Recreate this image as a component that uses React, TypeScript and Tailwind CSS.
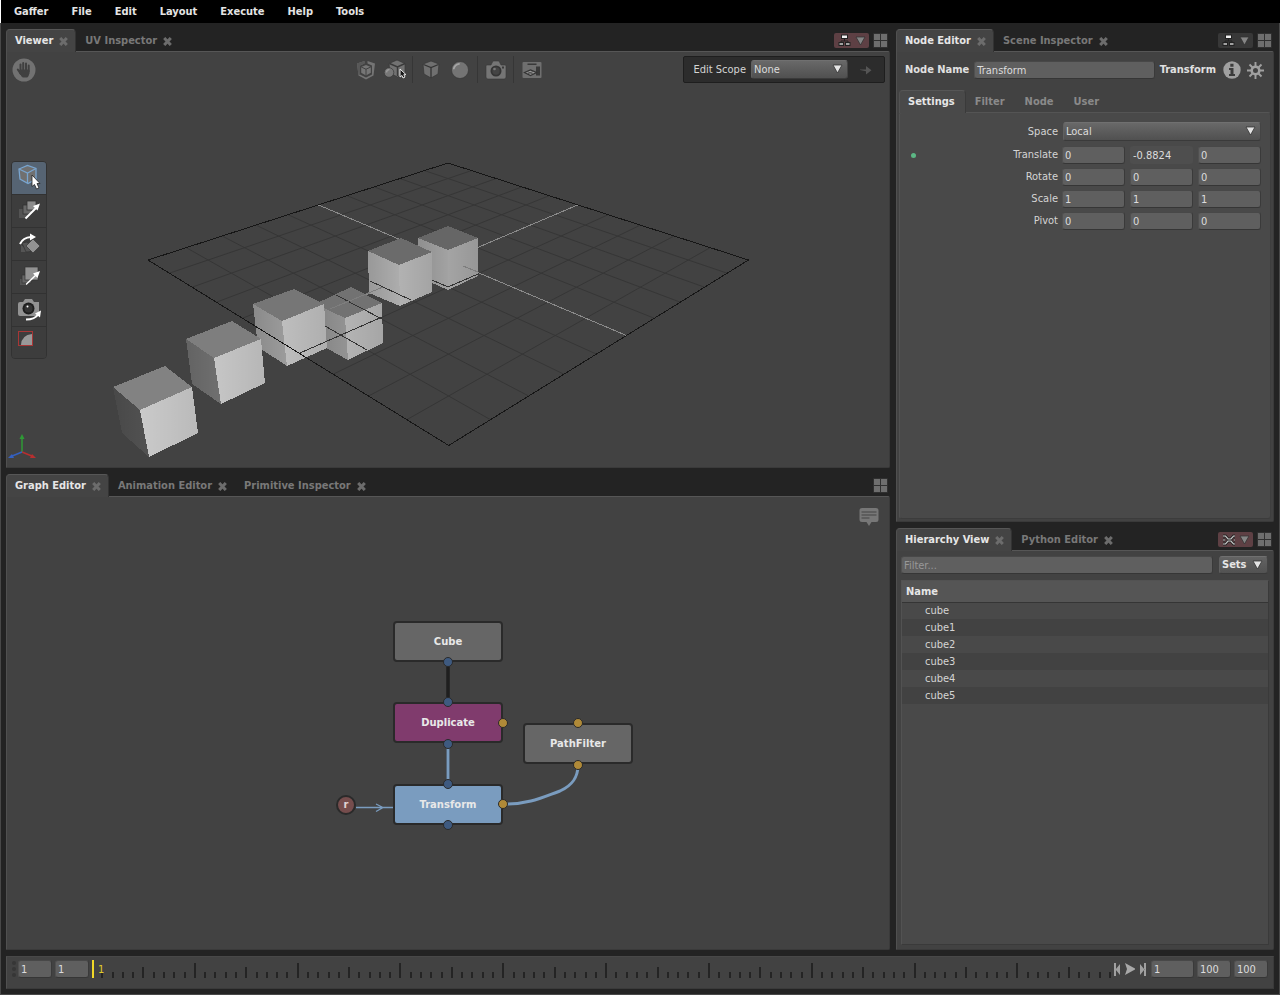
import { useState, type ReactNode } from 'react';
import clsx from 'clsx';

const MENUS = ['Gaffer', 'File', 'Edit', 'Layout', 'Execute', 'Help', 'Tools'];
const LOCATIONS = ['cube', 'cube1', 'cube2', 'cube3', 'cube4', 'cube5'];

const FIELD =
  'h-[18px] min-w-0 rounded-[3px] border border-t-[#484848] border-l-[#505050] border-r-[#3a3a3a] border-b-[#363636] bg-[#5f5f5f] px-[2px] text-[11px] text-[#dcdcdc] outline-none';

function CloseIcon() {
  return (
    <svg width="9" height="9" viewBox="0 0 9 9" className="text-[#6c6c6c]">
      <path d="M1.200 1 7.800 8M7.800 1 1.200 8" stroke="currentColor" strokeWidth="3" />
    </svg>
  );
}

function LayoutIcon() {
  return (
    <svg width="15" height="15" viewBox="0 0 15 15">
      <rect width="15" height="15" rx="1" fill="#303030" />
      <path d="M1 1h6v6H1zM8 1h6v6H8zM1 8h6v6H1zM8 8h6v6H8z" fill="#6e6e6e" />
    </svg>
  );
}

function Arrow({ dim = false }: { dim?: boolean }) {
  return (
    <svg width="9" height="8" viewBox="0 0 9 8" className="overflow-visible">
      <path d="M0 0h9L4.500 8z" fill={dim ? '#858585' : '#e4e4e4'} stroke="#333" strokeWidth=".8" />
    </svg>
  );
}

function FocusIcon() {
  return (
    <svg width="13" height="13" viewBox="0 0 13 13">
      <path d="M6.500 4v3M3 9V7h7v2" stroke="#222" fill="none" />
      <rect x="3.500" y="1" width="6" height="3.500" fill="#f0f0f0" stroke="#222" />
      <rect x="1" y="8.500" width="4.500" height="3" fill="#a2a2a2" stroke="#222" />
      <rect x="7.500" y="8.500" width="4.500" height="3" fill="#a2a2a2" stroke="#222" />
    </svg>
  );
}

function UnlinkIcon() {
  const d = 'M1 2h2.500L6 5h3l2.500-3H13M1 10h2.500L6 7h3l2.500 3H13M1 6h2M12 6h1';
  return (
    <svg width="14" height="12" viewBox="0 0 14 12" fill="none">
      <path d={d} stroke="#222" strokeWidth="2.800" />
      <path d={d} stroke="#c8c8c8" strokeWidth="1.200" />
    </svg>
  );
}

function PinButton({ pinned, icon }: { pinned: boolean; icon: ReactNode }) {
  return (
    <button
      aria-label="Editor focus"
      className={clsx(
        'flex h-[15px] w-[35px] items-center justify-between rounded-[2px] pr-1 pl-1',
        pinned ? 'bg-[#5e4044]' : 'bg-[#383838]',
      )}
    >
      {icon}
      <Arrow dim />
    </button>
  );
}

type EditorProps = {
  tabs: string[];
  controls: ReactNode;
  className: string;
  children: ReactNode;
};

function Editor({ tabs, controls, className, children }: EditorProps) {
  return (
    <section className={clsx('flex min-h-0 flex-col', className)}>
      <div className="flex h-[22px] items-start">
        <div className="flex" role="tablist">
          {tabs.map((tab, i) => (
            <div
              key={tab}
              className={clsx(
                'relative flex h-[23px] items-center gap-[6px] rounded-t-[4px] border border-b-0 pr-[7px] pl-2',
                i === 0
                  ? 'z-10 border-t-[#565656] border-r-[#333] border-l-[#505050] bg-[#444]'
                  : 'border-transparent',
              )}
            >
              <button
                role="tab"
                aria-selected={i === 0}
                className={clsx('font-bold', i === 0 ? 'text-[#e6e6e6]' : 'text-[#787878]')}
              >
                {tab}
              </button>
              <button aria-label={`Close ${tab}`}>
                <CloseIcon />
              </button>
            </div>
          ))}
        </div>
        <div className="ml-auto flex gap-1 pt-1 pr-[2px]">
          {controls}
          <button aria-label="Layout">
            <LayoutIcon />
          </button>
        </div>
      </div>
      <div className="relative flex min-h-0 flex-1 flex-col rounded-r-[2px] border border-t-[#565656] border-r-[#3a3a3a] border-b-[#3a3a3a] border-l-[#505050] bg-[#424242]">
        {children}
      </div>
    </section>
  );
}

function ObjectsIcon() {
  return (
    <svg width="22" height="22" viewBox="0 0 22 22">
      <path d="M2 4.500 9.500 2V4.500L5 6.500V15.500l6 3 6-3V6.500L12.500 4.500V2L20 4.500 18.500 16.500 11 20.500 3.500 16.500z" fill="#747474" />
      <path d="M2 4.500 9.500 2V4.500L5 6.500V15.500L3.500 16.500z" fill="#585858" />
      <path d="M6.200 8 11 6l4.800 2v5.800L11 16.500l-4.800-2.700z" fill="#767676" />
      <path d="M6.200 8 11 10.200 15.800 8M11 10.200v6.300" fill="none" stroke="#3c3c3c" strokeWidth=".9" />
    </svg>
  );
}

function ExpansionIcon() {
  return (
    <svg width="22" height="22" viewBox="0 0 22 22">
      <path d="M5 4.500 13 1l8 3.500V14l-7.500 4L6 14z" fill="#727272" stroke="#363636" strokeWidth=".7" />
      <path d="M5.500 4.500 13.500 8 21 4.500M13.500 8v9" fill="none" stroke="#3a3a3a" strokeWidth="1.400" />
      <circle cx="5" cy="13.500" r="4.800" fill="#777" stroke="#363636" strokeWidth=".7" />
      <path d="M2.500 13.500a3 3 0 0 1 3-3" stroke="#999" strokeWidth="1.500" fill="none" />
      <path d="M16 10v8l2-1.500 1 2.500 2-1-1.200-2.300H22z" fill="#161616" stroke="#e8e8e8" strokeWidth="1" />
    </svg>
  );
}

function ShadingIcon() {
  return (
    <svg width="22" height="22" viewBox="0 0 22 22">
      <path d="M3 5 11 2l8 3-1 10-7 4-7-4z" fill="#707070" stroke="#363636" strokeWidth=".7" />
      <path d="M3.500 5.500 11 8.500l7.500-3M11 8.500V19" fill="none" stroke="#343434" strokeWidth="1.300" />
    </svg>
  );
}

function SphereIcon() {
  return (
    <svg width="22" height="22" viewBox="0 0 22 22">
      <circle cx="11" cy="11" r="8.500" fill="#747474" stroke="#363636" strokeWidth=".7" />
      <path d="M4.800 9.500Q6 5.500 10 4.800" fill="none" stroke="#a5a5a5" strokeWidth="1.800" strokeLinecap="round" />
    </svg>
  );
}

function CameraIcon() {
  return (
    <svg width="22" height="22" viewBox="0 0 22 22">
      <path d="M2 6h4l2-4h6l2 4h4q1 0 1 1v11q0 2-2 2H3q-2 0-2-2V7q0-1 1-1z" fill="#757575" stroke="#383838" strokeWidth=".6" />
      <circle cx="11" cy="12" r="5.500" fill="#353535" />
      <circle cx="11" cy="12" r="3.700" fill="#444" />
      <circle cx="9.500" cy="10" r="1.300" fill="#777" />
      <rect x="17" y="7.500" width="2" height="2" fill="#3a3a3a" />
    </svg>
  );
}

function GadgetIcon() {
  return (
    <svg width="22" height="22" viewBox="0 0 22 22">
      <rect x="1.500" y="3" width="19" height="16" rx="1" fill="#6f6f6f" />
      <rect x="6.500" y="4.500" width="9" height="1.500" fill="#393939" />
      <rect x="15" y="7.500" width="4" height="9" fill="#393939" />
      <path d="m3.500 13.500 6-2.500 6 2.500-6 3z" fill="#999" stroke="#333" strokeWidth="1.200" />
      <path d="m6 12.500 6 2.500M12.500 12.300 6.500 15" stroke="#444" strokeWidth=".8" />
    </svg>
  );
}

function HandIcon() {
  return (
    <svg width="24" height="24" viewBox="0 0 24 24">
      <circle cx="12" cy="12" r="11.500" fill="#727272" />
      <g stroke="#404040" strokeWidth="2" strokeLinecap="round" fill="#404040">
        <path d="M8.500 6.500v7M11.200 5v8M14 5.500v8M16.700 7.500v6M5.800 11.500l3 4.500" />
        <path d="M8.500 12h8.500v3.500L15.500 19h-5L8 15.500z" strokeWidth="1" />
      </g>
    </svg>
  );
}

const DISPLAY_TOOLS = [
  [
    { name: 'Drawn objects', icon: <ObjectsIcon /> },
    { name: 'Expansion', icon: <ExpansionIcon /> },
  ],
  [
    { name: 'Drawing mode', icon: <ShadingIcon /> },
    { name: 'Shading', icon: <SphereIcon /> },
  ],
  [{ name: 'Camera', icon: <CameraIcon /> }],
  [{ name: 'Gadgets', icon: <GadgetIcon /> }],
];

const TOOLS = [
  {
    name: 'Selection Tool',
    icon: (
      <svg width="28" height="28" viewBox="0 0 28 28">
        <path d="M4 6 12.500 2.500 21 5.500V16L13 20.500 5 16z" fill="#707070" stroke="#79a5cf" strokeWidth="1.300" />
        <path d="M4 6l8.500 4L21 5.500M12.500 10v10" fill="none" stroke="#79a5cf" strokeWidth="1.300" />
        <path d="M17 12v11.500l2.500-2 2 4.500 2.500-1-2-4.500H25z" fill="#fff" stroke="#222" strokeWidth=".8" />
      </svg>
    ),
  },
  {
    name: 'Translate Tool',
    icon: (
      <svg width="28" height="28" viewBox="0 0 28 28">
        <rect x="4" y="13" width="9" height="9" fill="#545454" />
        <rect x="8" y="9" width="9" height="9" fill="#686868" stroke="#333" strokeWidth=".8" />
        <rect x="12" y="5" width="9" height="9" fill="#8c8c8c" stroke="#333" strokeWidth=".8" />
        <path d="M10.500 22.500 22 11" stroke="#fff" strokeWidth="2" />
        <path d="m25 7.500-7 2.500 4.500 4.500z" fill="#fff" />
      </svg>
    ),
  },
  {
    name: 'Rotate Tool',
    icon: (
      <svg width="28" height="28" viewBox="0 0 28 28">
        <path d="M6 16 6 23h9z" fill="#555" />
        <path d="m7 14 5-1 8 9-9 1z" fill="#555" stroke="#333" strokeWidth=".7" />
        <path d="m11 17 7-7 7 7-7 7z" fill="#929292" stroke="#333" strokeWidth=".7" />
        <path d="M5 15Q8 8.500 16 8" fill="none" stroke="#fff" strokeWidth="2" />
        <path d="m21 8-6-3.500v7z" fill="#fff" />
      </svg>
    ),
  },
  {
    name: 'Scale Tool',
    icon: (
      <svg width="28" height="28" viewBox="0 0 28 28">
        <rect x="5" y="17" width="5" height="6" fill="#555" />
        <rect x="7" y="13" width="9" height="8" fill="#656565" stroke="#333" strokeWidth=".7" />
        <rect x="10" y="5" width="13" height="13" fill="#929292" stroke="#333" strokeWidth=".7" />
        <path d="M11 22.500 22 12" stroke="#fff" strokeWidth="1.500" />
        <path d="m25 9-7 2.500 4.500 4.500z" fill="#fff" />
      </svg>
    ),
  },
  {
    name: 'Camera Tool',
    icon: (
      <svg width="28" height="28" viewBox="0 0 28 28">
        <path d="M5 7h3l2-3h7l2 3h5v12q0 2-2 2H5q-2 0-2-2V9q0-2 2-2z" fill="#929292" />
        <circle cx="13.500" cy="13.500" r="6" fill="#1e1e1e" />
        <circle cx="13.500" cy="13.500" r="4" fill="#333" />
        <circle cx="12.500" cy="11.500" r="1" fill="#fff" />
        <path d="M11 24.500q9 0 12-5" fill="none" stroke="#fff" strokeWidth="2" />
        <path d="m26 15.500-6 3 5 4z" fill="#fff" />
      </svg>
    ),
  },
  {
    name: 'Crop Window Tool',
    icon: (
      <svg width="28" height="28" viewBox="0 0 28 28">
        <rect x="3.500" y="3.500" width="14" height="14" fill="none" stroke="#a83636" strokeWidth="1" />
        <path d="M6 17Q6.500 7 17 6v11z" fill="#999" />
      </svg>
    ),
  },
];

// Corners of the ground plane (top, right, left) in homogeneous form.
const TOP = [448, 163, 1.3133];
const RIGHT = [748.5, 260, 1];
const LEFT = [148, 260, 1];

function project(u: number, v: number) {
  const at = (i: number) => {
    const t = i === 2 ? TOP[2] : TOP[i] * TOP[2];
    return t + u * (RIGHT[i] - t) + v * (LEFT[i] - t);
  };
  const w = at(2);
  return `${(at(0) / w).toFixed(1)} ${(at(1) / w).toFixed(1)}`;
}

function planeLine(u0: number, v0: number, u1: number, v1: number) {
  return `M${project(u0, v0)}L${project(u1, v1)}`;
}

const GRID_LINES = [1, 2, 3, 4, 6, 7, 8, 9]
  .map((n) => planeLine(n / 10, 0, n / 10, 1) + planeLine(0, n / 10, 1, n / 10))
  .join('');

const CUBES = [
  { top: '448,226 478,238 448,250 418,238', left: '418,238 448,250 448,290 419,277', right: '448,250 478,238 478,276 448,290', fill: ['#666', '#a2a2a2', '#a4a4a4'] },
  { top: '401,238 432,252 399,265 368,251', left: '368,251 399,265 400,306 369,293', right: '399,265 432,252 432,292 400,306', fill: ['#6b6b6b', '#adadad', '#b2b2b2'] },
  { top: '351,287 382,303 345,318 315,304', left: '315,304 345,318 348,360 321,345', right: '345,318 382,303 383,343 348,360', fill: ['#727272', '#949494', '#b4b4b4'] },
  { top: '294,289 324,304 282,321 253,304', left: '253,304 282,321 287,366 258,347', right: '282,321 324,304 327,348 287,366', fill: ['#767676', '#9c9c9c', '#bebebe'] },
  { top: '232,321 261,339 214,358 186,339', left: '186,339 214,358 221,404 192,384', right: '214,358 261,339 265,383 221,404', fill: ['#7e7e7e', '#707070', '#c6c6c6'] },
  { top: '165,366 192,387 140,410 113,387', left: '113,387 140,410 149,457 122,433', right: '140,410 192,387 198,433 149,457', fill: ['#828282', '#525252', '#cacaca'] },
];

function Viewport() {
  return (
    <svg
      viewBox="7 52 882 415"
      preserveAspectRatio="xMidYMid slice"
      className="absolute inset-0 h-full w-full"
      fill="none"
      role="img"
      aria-label="Scene"
    >
      <defs>
        <linearGradient id="shadeLeft">
          <stop offset="0" stopColor="#000" stopOpacity=".12" />
          <stop offset="1" stopColor="#000" stopOpacity="0" />
        </linearGradient>
        <linearGradient id="shadeRight">
          <stop offset="0" stopColor="#000" stopOpacity="0" />
          <stop offset="1" stopColor="#000" stopOpacity=".08" />
        </linearGradient>
      </defs>
      <path d={GRID_LINES} stroke="#363636" />
      <g shapeRendering="crispEdges">
        <path d={planeLine(0.5, 0, 0.5, 1) + planeLine(0, 0.5, 1, 0.5)} stroke="#8a8a8a" />
        <path d={planeLine(0, 0, 1, 0) + planeLine(1, 0, 1, 1) + planeLine(0, 0, 0, 1)} stroke="#161616" />
        {CUBES.map((cube) => (
          <g key={cube.top}>
            <polygon points={cube.top} fill={cube.fill[0]} />
            <polygon points={cube.left} fill={cube.fill[1]} />
            <polygon points={cube.left} fill="url(#shadeLeft)" />
            <polygon points={cube.right} fill={cube.fill[2]} />
            <polygon points={cube.right} fill="url(#shadeRight)" />
          </g>
        ))}
        {/* parts of the plane that pass in front of the cubes */}
        <path d="M300 353 382 317M325 326 367 350M336 295 382 319M370 281 411 300M432 280 448 287 478 274" stroke="#333" />
        <path d="M330 309 383 287M463 266 478 272" stroke="#7e7e7e" />
        <path d={planeLine(0, 1, 1, 1)} stroke="#161616" />
      </g>
      <g strokeWidth="1.500">
        <path d="M22 452V438" stroke="#2f9a36" />
        <path d="M22 452 33 456.500" stroke="#b82f2f" />
        <path d="M22 452 11 456.500" stroke="#3460c0" />
      </g>
      <path d="m22 434-2.500 5h5z" fill="#2f9a36" />
      <path d="m36 458-6 0 2-4z" fill="#b82f2f" />
      <path d="m8 458 6 0-2-4z" fill="#3460c0" />
    </svg>
  );
}

function Select({ id, options, className }: { id: string; options: string[]; className: string }) {
  return (
    <div className={clsx('relative', className)}>
      <select
        id={id}
        className="block h-[19px] w-full appearance-none rounded-[3px] border border-t-[#707070] border-r-[#444] border-b-[#3a3a3a] border-l-[#606060] bg-linear-to-b from-[#696969] to-[#505050] pl-[2px] text-[11px] text-[#dcdcdc] outline-none"
      >
        {options.map((option) => (
          <option key={option}>{option}</option>
        ))}
      </select>
      <span className="pointer-events-none absolute top-[5px] right-[6px]">
        <Arrow />
      </span>
    </div>
  );
}

function Viewer() {
  return (
    <>
      <Viewport />
      <div className="relative grid grid-cols-[1fr_auto_1fr] items-center pt-1 pr-1 pl-[5px]">
        <button aria-label="Pan" className="justify-self-start">
          <HandIcon />
        </button>
        <div className="flex items-center gap-[6px]">
          {DISPLAY_TOOLS.map((group, i) => (
            <div key={group[0].name} className="flex items-center gap-[7px]">
              {i > 0 && <span className="h-[27px] w-px bg-[#363636]" />}
              {group.map((tool) => (
                <button key={tool.name} aria-label={tool.name}>
                  {tool.icon}
                </button>
              ))}
            </div>
          ))}
        </div>
        <div className="flex h-[27px] items-center justify-self-end rounded-[2px] border border-[#1e1e1e] bg-[#2c2c2c] pr-3 pl-[10px]">
          <label htmlFor="editScope" className="mr-[5px]">Edit Scope</label>
          <Select id="editScope" options={['None', 'Self']} className="w-[97px]" />
          <button aria-label="Edit scope navigation" className="ml-3">
            <svg width="12" height="10" viewBox="0 0 12 10">
              <path d="M0 4.500h6V1l5.500 4.200L6 9.500V6.200L0 5z" fill="#555" />
            </svg>
          </button>
        </div>
      </div>
      <div className="relative flex-1">
        <div className="absolute top-[78px] left-1 flex flex-col overflow-hidden rounded-[4px] border border-[#323232]">
          {TOOLS.map((tool, i) => (
            <button
              key={tool.name}
              aria-label={tool.name}
              className={clsx(
                'flex h-[33px] w-[34px] items-start justify-center border-b border-[#323232] pt-[1px] last:h-[31px] last:border-b-0',
                i === 0 ? 'bg-[#566473]' : 'bg-[#3d3d3d]',
              )}
            >
              {tool.icon}
            </button>
          ))}
        </div>
      </div>
    </>
  );
}

const NODES = [
  { name: 'Cube', className: 'left-[135px] top-[3px] bg-[#666]' },
  { name: 'Duplicate', className: 'left-[135px] top-[84px] bg-[#803b6d]' },
  { name: 'PathFilter', className: 'left-[265px] top-[105px] bg-[#666]' },
  { name: 'Transform', className: 'left-[135px] top-[166px] bg-[#7a9cbf]' },
];

const PLUGS = [
  { x: 190, y: 44, fill: '#3e5a80' },
  { x: 190, y: 84, fill: '#3e5a80' },
  { x: 190, y: 126, fill: '#3e5a80' },
  { x: 190, y: 166, fill: '#3e5a80' },
  { x: 190, y: 207, fill: '#3e5a80' },
  { x: 245, y: 105, fill: '#b08a38' },
  { x: 245, y: 186, fill: '#b08a38' },
  { x: 320, y: 105, fill: '#b08a38' },
  { x: 320, y: 147, fill: '#b08a38' },
];

function GraphEditor() {
  return (
    <div className="flex flex-1 items-center justify-center font-['DejaVu_Sans',sans-serif] text-[10px]">
      <button aria-label="Annotations" className="absolute top-[10px] right-[10px]">
        <svg width="20" height="20" viewBox="0 0 20 20">
          <path d="M3 1h14q2.500 0 2.500 2.500v9q0 2.500-2.500 2.500h-4.500L10 19 7.500 15H3Q.5 15 .5 12.500v-9Q.5 1 3 1z" fill="#777" />
          <path d="M2.500 5h15M2.500 8h15M2.500 11h8" stroke="#444" strokeWidth="1.200" />
        </svg>
      </button>
      <div className="relative h-[210px] w-[380px]">
        <svg viewBox="0 0 380 210" className="absolute inset-0 h-full w-full" fill="none">
          <path d="M190 44v40" stroke="#1f1f1f" strokeWidth="3.500" />
          <g stroke="#7a9cbf">
            <path d="M190 126v40" stroke="#303030" strokeWidth="4" />
            <path d="M190 126v40M248 186C272 186 285 179 302 173 315 167 320 159 320 147" strokeWidth="3" />
            <path d="M98 189.500h38M118 186l7 3.500-7 4" strokeWidth="1.300" />
          </g>
        </svg>
        {NODES.map((node) => (
          <div
            key={node.name}
            className={clsx(
              'absolute flex h-[41px] w-[110px] items-center justify-center rounded-[4px] border-2 border-[#2a2a2a] pt-px font-bold text-[#e8e8e8]',
              node.className,
            )}
          >
            {node.name}
          </div>
        ))}
        <div className="absolute top-[177px] left-[78px] flex h-5 w-5 items-center justify-center rounded-full border-2 border-[#2a2a2a] bg-[#764d4d] font-bold text-[#e0d4d4]">
          r
        </div>
        <svg viewBox="0 0 380 210" className="absolute inset-0 h-full w-full overflow-visible">
          {PLUGS.map((plug) => (
            <circle key={`${plug.x}-${plug.y}`} cx={plug.x} cy={plug.y} r="4.500" fill={plug.fill} stroke="#2a2a2a" />
          ))}
        </svg>
      </div>
    </div>
  );
}

const TRANSFORM_PLUGS = [
  { name: 'Translate', values: ['0', '-0.8824', '0'], edited: true },
  { name: 'Rotate', values: ['0', '0', '0'] },
  { name: 'Scale', values: ['1', '1', '1'] },
  { name: 'Pivot', values: ['0', '0', '0'] },
];

function NodeEditor() {
  const [name, setName] = useState('Transform');

  return (
    <div className="flex flex-1 flex-col px-[2px] pb-[2px]">
      <div className="flex h-9 items-center pr-[7px] pl-[6px]">
        <label htmlFor="nodeName" className="mr-[5px] font-bold text-[#e0e0e0]">Node Name</label>
        <input
          id="nodeName"
          value={name}
          onChange={(e) => setName(e.target.value)}
          className={clsx(FIELD, 'flex-1')}
        />
        <span className="mr-[7px] ml-[5px] font-bold text-[#e0e0e0]">Transform</span>
        <button aria-label="Node info" className="mr-[6px]">
          <svg width="18" height="18" viewBox="0 0 18 18">
            <circle cx="9" cy="9" r="8.700" fill="#a0a0a0" />
            <path d="M7.300 2.800h3.200v3H7.300zM6 7h4.500v6H12v2H6v-2h1.500V9H6z" fill="#3c3c3c" />
          </svg>
        </button>
        <button aria-label="Node settings">
          <svg width="17" height="17" viewBox="0 0 17 17" fill="none" stroke="#a0a0a0">
            <circle cx="8.500" cy="8.500" r="3.800" strokeWidth="2.600" />
            <path d="M8.500 0v4M8.500 13v4M0 8.500h4M13 8.500h4M2.500 2.500l3 3M11.500 11.500l3 3M14.500 2.500l-3 3M5.500 11.500l-3 3" strokeWidth="1.900" />
          </svg>
        </button>
      </div>
      <div className="mt-[2px] flex h-[22px] items-start" role="tablist">
        {['Settings', 'Filter', 'Node', 'User'].map((tab, i) => (
          <button
            key={tab}
            role="tab"
            aria-selected={i === 0}
            className={clsx(
              'relative h-[23px] rounded-t-[4px] border border-b-0 pr-[10px] pl-2 font-bold',
              i === 0
                ? 'z-10 border-t-[#565656] border-r-[#3a3a3a] border-l-[#525252] bg-[#494949] text-[#e6e6e6]'
                : 'border-transparent text-[#8a8a8a]',
            )}
          >
            {tab}
          </button>
        ))}
      </div>
      <div className="flex flex-1 flex-col gap-1 rounded-[3px] border border-t-[#545454] border-r-[#3e3e3e] border-b-[#3c3c3c] border-l-[#525252] bg-[#494949] pt-[9px] pr-[9px] pl-[11px]">
        <div className="mb-[1px] flex items-center justify-end">
          <label htmlFor="space" className="mr-[5px]">Space</label>
          <Select id="space" options={['Local', 'Parent', 'World']} className="w-[198px]" />
        </div>
        {TRANSFORM_PLUGS.map((plug) => (
          <div key={plug.name} role="group" aria-label={plug.name} className="flex items-center">
            {plug.edited && <span className="h-[5px] w-[5px] rounded-full bg-[#5cb885]" />}
            <span className="mr-[4px] ml-auto">{plug.name}</span>
            <div className="flex gap-[5px]">
              {plug.values.map((value, i) => (
                <input
                  key={i}
                  aria-label={`${plug.name} ${'xyz'[i]}`}
                  defaultValue={value}
                  className={clsx(
                    FIELD,
                    'w-[63px]',
                    value === '-0.8824' && 'border-transparent! bg-[#4e4e4e]!',
                  )}
                />
              ))}
            </div>
          </div>
        ))}
      </div>
    </div>
  );
}

function HierarchyView() {
  return (
    <div className="flex flex-1 flex-col px-1 pt-[5px] pb-1">
      <div className="mb-[6px] flex gap-[6px] pr-[1px]">
        <input aria-label="Filter" placeholder="Filter..." className={clsx(FIELD, 'flex-1 placeholder:text-[#989898]')} />
        <button className="flex h-[18px] w-[49px] items-center justify-between rounded-[3px] border border-t-[#707070] border-r-[#444] border-b-[#3a3a3a] border-l-[#606060] bg-linear-to-b from-[#636363] to-[#525252] pr-[5px] pl-[2px] font-bold text-[#e6e6e6]">
          Sets
          <Arrow />
        </button>
      </div>
      <div className="flex-1 border border-t-[#525252] border-r-[#3a3a3a] border-b-[#3a3a3a] border-l-[#525252] bg-[#494949]">
        <table className="w-full border-collapse text-left">
          <thead>
            <tr className="h-[21px] border-b border-[#353535] bg-[#555]">
              <th className="p-0 pt-px pl-1 font-bold text-[#e6e6e6]">Name</th>
            </tr>
          </thead>
          <tbody>
            {LOCATIONS.map((location) => (
              <tr key={location} className="h-[17px] even:bg-[#424242]">
                <td className="p-0 pl-[23px]">{location}</td>
              </tr>
            ))}
          </tbody>
        </table>
      </div>
    </div>
  );
}

function Timeline() {
  const frames = Array.from({ length: 99 }, (_, i) => i + 1);

  return (
    <footer className="mt-[6px] flex h-[33px] items-start border border-t-[#484848] border-r-[#3a3a3a] border-b-[#3a3a3a] border-l-[#505050] bg-[#424242] pt-[3px] pr-[5px] pl-[5px]">
      <svg width="4" height="18" viewBox="0 0 4 18" fill="#363636" className="mr-[2px]">
        <circle cx="2" cy="3" r="2" />
        <circle cx="2" cy="9" r="2" />
        <circle cx="2" cy="15" r="2" />
      </svg>
      <input aria-label="Start frame" defaultValue="1" className={clsx(FIELD, 'mr-[3px] w-[34px]')} />
      <input aria-label="Slider start" defaultValue="1" className={clsx(FIELD, 'w-[34px]')} />
      <svg height="18" className="mr-1 ml-[2px] min-w-0 flex-1 overflow-visible" role="img" aria-label="Frames">
        {frames.map((frame) => {
          const h = frame % 10 === 0 ? 15 : frame % 5 === 0 ? 11 : 6;
          return (
            <rect key={frame} x={`${(frame / 99) * 100}%`} y={18 - h} width="2" height={h} fill="#242424" shapeRendering="crispEdges" />
          );
        })}
        <rect x="1" width="2" height="18" fill="#f0d828" />
        <text x="7" y="13" fontSize="11" fill="#e0cc28">1</text>
      </svg>
      <div className="flex h-[18px] w-[38px] items-center justify-between pr-[4px]">
        <button aria-label="To start">
          <svg width="8" height="13" viewBox="0 0 8 13" fill="#a0a0a0">
            <path d="M1 0h2v13H1zM7 1v11L2.500 6.500z" />
          </svg>
        </button>
        <button aria-label="Play">
          <svg width="10" height="12" viewBox="0 0 10 12" fill="#a8a8a8">
            <path d="M0 0 10 5.500V6.500L0 12l2-6z" />
          </svg>
        </button>
        <button aria-label="To end">
          <svg width="8" height="13" viewBox="0 0 8 13" fill="#a0a0a0">
            <path d="M5 0h2v13H5zM1 1v11L5.500 6.500z" />
          </svg>
        </button>
      </div>
      <input aria-label="Current frame" defaultValue="1" className={clsx(FIELD, 'mr-[3px] w-[43px]')} />
      <input aria-label="Slider end" defaultValue="100" className={clsx(FIELD, 'mr-[3px] w-[34px]')} />
      <input aria-label="End frame" defaultValue="100" className={clsx(FIELD, 'w-[34px]')} />
    </footer>
  );
}

export default function App() {
  return (
    <div className="flex h-screen flex-col bg-[#232323] font-['DejaVu_Sans_Condensed','DejaVu_Sans',sans-serif] text-[11px] leading-[14px] text-[#d4d4d4]">
      <nav className="flex h-[23px] items-center gap-[23px] border-l border-white bg-black pl-[13px]">
        {MENUS.map((menu) => (
          <button key={menu} className="font-bold text-[#e4e4e4]">
            {menu}
          </button>
        ))}
      </nav>
      <div className="flex min-h-0 flex-1 flex-col border border-t-0 border-[#484848] px-[5px] pt-[6px] pb-[5px]">
        <main className="flex min-h-0 flex-1 gap-[6px]">
          <div className="flex min-w-0 flex-[884] flex-col gap-[6px]">
            <Editor
              tabs={['Viewer', 'UV Inspector']}
              controls={<PinButton pinned icon={<FocusIcon />} />}
              className="flex-[439]"
            >
              <Viewer />
            </Editor>
            <Editor
              tabs={['Graph Editor', 'Animation Editor', 'Primitive Inspector']}
              controls={null}
              className="flex-[476]"
            >
              <GraphEditor />
            </Editor>
          </div>
          <div className="flex min-w-0 flex-[378] flex-col gap-[6px]">
            <Editor
              tabs={['Node Editor', 'Scene Inspector']}
              controls={<PinButton pinned={false} icon={<FocusIcon />} />}
              className="flex-[493]"
            >
              <NodeEditor />
            </Editor>
            <Editor
              tabs={['Hierarchy View', 'Python Editor']}
              controls={<PinButton pinned icon={<UnlinkIcon />} />}
              className="flex-[422]"
            >
              <HierarchyView />
            </Editor>
          </div>
        </main>
        <Timeline />
      </div>
    </div>
  );
}
